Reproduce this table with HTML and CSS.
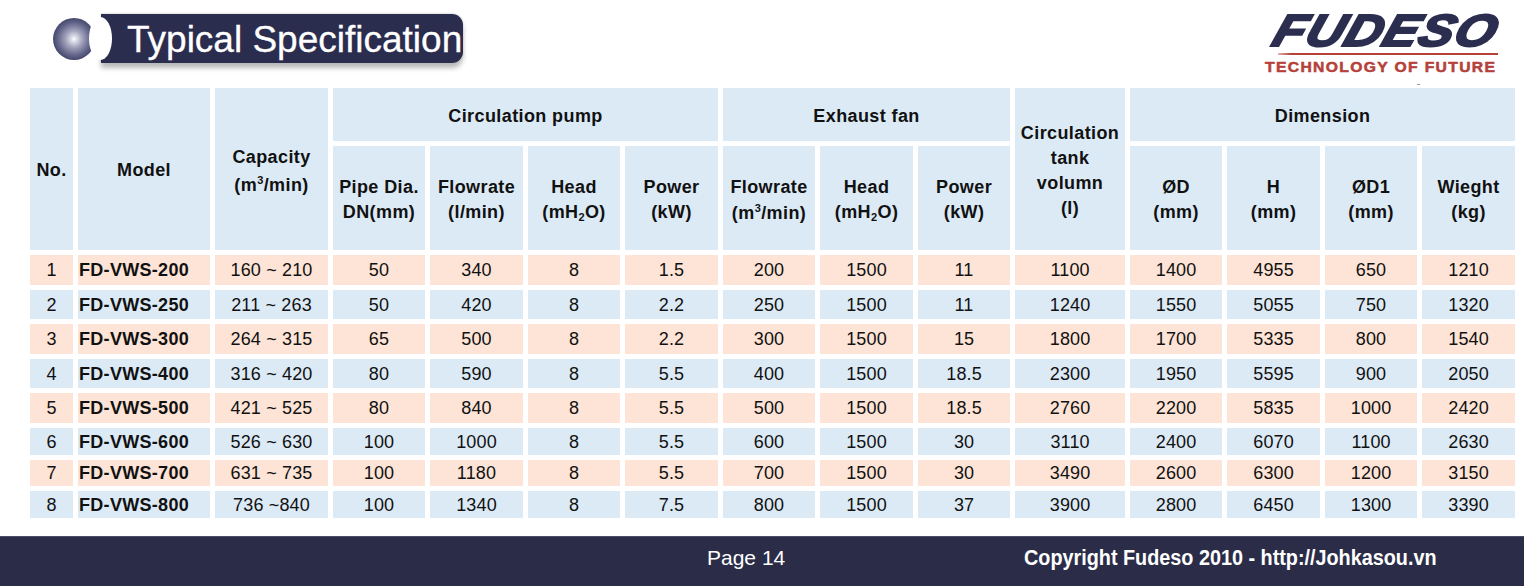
FILE: index.html
```html
<!DOCTYPE html>
<html lang="en">
<head>
<meta charset="utf-8">
<title>Typical Specification</title>
<link rel="stylesheet" href="styles.css">
</head>
<body>
<div class="page">
  <header class="top">
    <div class="title-group">
      <div class="sphere"></div>
      <div class="banner"><span class="banner-text">Typical Specification</span></div>
    </div>
    <div class="logo">
      <div class="logo-word"><span class="logo-word-in">FUDESO</span></div>
      <div class="logo-line"></div>
      <div class="logo-tag"><span class="logo-tag-in">TECHNOLOGY OF FUTURE</span></div>
    </div>
    <span class="mark"></span>
  </header>

  <table class="spec">
    <colgroup>
      <col class="w43"><col class="w132"><col class="w113">
      <col class="w92"><col class="w93"><col class="w92"><col class="w93">
      <col class="w92"><col class="w93"><col class="w92">
      <col class="w110">
      <col class="w92"><col class="w93"><col class="w92"><col class="w93">
    </colgroup>
    <thead>
      <tr class="h1">
        <th rowspan="2">No.</th>
        <th rowspan="2">Model</th>
        <th rowspan="2" class="cap">Capacity<br>(m<sup>3</sup>/min)</th>
        <th colspan="4" class="grp">Circulation pump</th>
        <th colspan="3" class="grp">Exhaust fan</th>
        <th rowspan="2">Circulation<br>tank<br>volumn<br>(l)</th>
        <th colspan="4" class="grp">Dimension</th>
      </tr>
      <tr class="h2">
        <th>Pipe Dia.<br>DN(mm)</th>
        <th>Flowrate<br>(l/min)</th>
        <th>Head<br>(mH<sub>2</sub>O)</th>
        <th>Power<br>(kW)</th>
        <th class="flow">Flowrate<br>(m<sup>3</sup>/min)</th>
        <th>Head<br>(mH<sub>2</sub>O)</th>
        <th>Power<br>(kW)</th>
        <th>ØD<br>(mm)</th>
        <th>H<br>(mm)</th>
        <th>ØD1<br>(mm)</th>
        <th>Wieght<br>(kg)</th>
      </tr>
    </thead>
    <tbody>
      <tr class="r30"><td>1</td><td class="model">FD-VWS-200</td><td>160 ~ 210</td><td>50</td><td>340</td><td>8</td><td>1.5</td><td>200</td><td>1500</td><td>11</td><td>1100</td><td>1400</td><td>4955</td><td>650</td><td>1210</td></tr>
      <tr class="r29"><td>2</td><td class="model">FD-VWS-250</td><td>211 ~ 263</td><td>50</td><td>420</td><td>8</td><td>2.2</td><td>250</td><td>1500</td><td>11</td><td>1240</td><td>1550</td><td>5055</td><td>750</td><td>1320</td></tr>
      <tr class="r30"><td>3</td><td class="model">FD-VWS-300</td><td>264 ~ 315</td><td>65</td><td>500</td><td>8</td><td>2.2</td><td>300</td><td>1500</td><td>15</td><td>1800</td><td>1700</td><td>5335</td><td>800</td><td>1540</td></tr>
      <tr class="r29"><td>4</td><td class="model">FD-VWS-400</td><td>316 ~ 420</td><td>80</td><td>590</td><td>8</td><td>5.5</td><td>400</td><td>1500</td><td>18.5</td><td>2300</td><td>1950</td><td>5595</td><td>900</td><td>2050</td></tr>
      <tr class="r30"><td>5</td><td class="model">FD-VWS-500</td><td>421 ~ 525</td><td>80</td><td>840</td><td>8</td><td>5.5</td><td>500</td><td>1500</td><td>18.5</td><td>2760</td><td>2200</td><td>5835</td><td>1000</td><td>2420</td></tr>
      <tr class="r27"><td>6</td><td class="model">FD-VWS-600</td><td>526 ~ 630</td><td>100</td><td>1000</td><td>8</td><td>5.5</td><td>600</td><td>1500</td><td>30</td><td>3110</td><td>2400</td><td>6070</td><td>1100</td><td>2630</td></tr>
      <tr class="r26"><td>7</td><td class="model">FD-VWS-700</td><td>631 ~ 735</td><td>100</td><td>1180</td><td>8</td><td>5.5</td><td>700</td><td>1500</td><td>30</td><td>3490</td><td>2600</td><td>6300</td><td>1200</td><td>3150</td></tr>
      <tr class="r27"><td>8</td><td class="model">FD-VWS-800</td><td>736 ~840</td><td>100</td><td>1340</td><td>8</td><td>7.5</td><td>800</td><td>1500</td><td>37</td><td>3900</td><td>2800</td><td>6450</td><td>1300</td><td>3390</td></tr>
    </tbody>
  </table>

  <footer class="foot">
    <span class="page-no">Page 14</span>
    <span class="copy">Copyright Fudeso 2010 - http://Johkasou.vn</span>
  </footer>
</div>
</body>
</html>
```
FILE: styles.css
```css
html, body {
  margin: 0;
  padding: 0;
  background: #ffffff;
}

.page {
  position: relative;
  width: 1524px;
  height: 586px;
  display: flex;
  flex-direction: column;
  font-family: "Liberation Sans", Arial, sans-serif;
  color: #111111;
  overflow: hidden;
}

/* ---------- top area ---------- */
.top {
  position: relative;
  height: 83px;
  display: flex;
  align-items: flex-start;
  flex-shrink: 0;
}

.title-group {
  display: flex;
  align-items: center;
  margin-top: 14px;
  margin-left: 53px;
}

.sphere {
  width: 42px;
  height: 42px;
  border-radius: 50%;
  margin-right: 6px;
  background: radial-gradient(circle at 50% 50%, #ffffff 0%, #e2e2ec 8%, #a3a4bc 28%, #62648a 55%, #34365a 80%, #262845 100%);
}

.banner {
  position: relative;
  width: 362px;
  height: 47px;
  padding-top: 2px;
  background: #2b2d4e;
  border-radius: 0 11px 11px 0;
  box-shadow: 0 -1px 2px rgba(0, 0, 0, 0.12), 0 5px 5px rgba(0, 0, 0, 0.28);
}

.banner::before {
  content: "";
  position: absolute;
  left: -12px;
  top: 3px;
  width: 23px;
  height: 43px;
  border-radius: 50%;
  background: #ffffff;
}

.banner-text {
  position: relative;
  display: block;
  padding-left: 26px;
  font-size: 37px;
  line-height: 47px;
  color: #ffffff;
  white-space: nowrap;
  -webkit-text-stroke: 0.3px #ffffff;
}

.logo {
  margin-left: auto;
  margin-right: 26px;
  margin-top: 9px;
  width: 233px;
}

.logo-word {
  height: 44px;
  text-align: right;
  white-space: nowrap;
}

.logo-word-in {
  display: inline-block;
  font-size: 45px;
  line-height: 44px;
  font-weight: bold;
  font-style: italic;
  color: #2c2e50;
  letter-spacing: 1px;
  -webkit-text-stroke: 2.2px #2c2e50;
  transform-origin: right center;
  transform: scaleX(1.15) skewX(-16deg);
}

.logo-line {
  height: 2px;
  margin-left: 13px;
  margin-top: 0;
  background: linear-gradient(to right, rgba(181, 65, 58, 0.4), #b5413a 6%, #b5413a);
}

.logo-tag {
  margin-top: 3px;
  height: 14px;
  white-space: nowrap;
}

.logo-tag-in {
  display: inline-block;
  font-size: 14px;
  line-height: 14px;
  font-weight: bold;
  color: #b5413a;
  letter-spacing: 1.2px;
  -webkit-text-stroke: 0.5px #b5413a;
  transform-origin: left center;
  transform: scaleX(1.12);
}

.mark {
  position: absolute;
  left: 1417px;
  top: 84px;
  width: 3px;
  height: 1px;
  background: #9a9a9a;
}

/* ---------- table ---------- */
.spec {
  margin-left: 25px;
  border-collapse: separate;
  border-spacing: 5px;
  table-layout: fixed;
  width: 1495px;
  flex-shrink: 0;
}

.w43 { width: 43px; }
.w132 { width: 132px; }
.w113 { width: 113px; }
.w92 { width: 92px; }
.w93 { width: 93px; }
.w110 { width: 110px; }

.spec th {
  padding: 3px 0 0 0;
  background: #dceaf6;
  font-size: 18px;
  font-weight: bold;
  line-height: 25px;
  letter-spacing: 0.4px;
  text-align: center;
  vertical-align: middle;
  color: #111111;
}

.spec .h1 .grp { height: 50px; }
.spec .h2 th { height: 101px; }

.spec th.cap { line-height: 28px; }
.spec th.flow { line-height: 26px; }

.spec sup {
  font-size: 11px;
  line-height: 0;
  vertical-align: 7px;
}

.spec sub {
  font-size: 11px;
  line-height: 0;
  vertical-align: -3px;
}

.spec td {
  padding: 0;
  font-size: 18px;
  line-height: 20px;
  text-align: center;
  vertical-align: middle;
  color: #111111;
  letter-spacing: 0.15px;
  white-space: nowrap;
}

.spec td.model {
  text-align: left;
  padding-left: 1px;
  font-weight: bold;
  letter-spacing: 0.3px;
}

.spec tbody tr:nth-child(odd) td { background: #fde4d6; }
.spec tbody tr:nth-child(even) td { background: #dceaf6; }

.spec .r30 td { height: 30px; }
.spec .r29 td { height: 29px; }
.spec .r27 td { height: 27px; }
.spec .r26 td { height: 26px; }

/* ---------- footer ---------- */
.foot {
  margin-top: auto;
  height: 49px;
  flex-shrink: 0;
  display: flex;
  align-items: flex-start;
  background: #2b2d48;
  border-top: 1px solid #4a4c66;
  color: #ffffff;
  line-height: 41px;
  white-space: nowrap;
}

.page-no {
  margin-left: 707px;
  font-size: 21px;
  width: 317px;
}

.copy {
  display: inline-block;
  font-size: 22px;
  font-weight: bold;
  transform-origin: left center;
  transform: scaleX(0.9);
}
```
